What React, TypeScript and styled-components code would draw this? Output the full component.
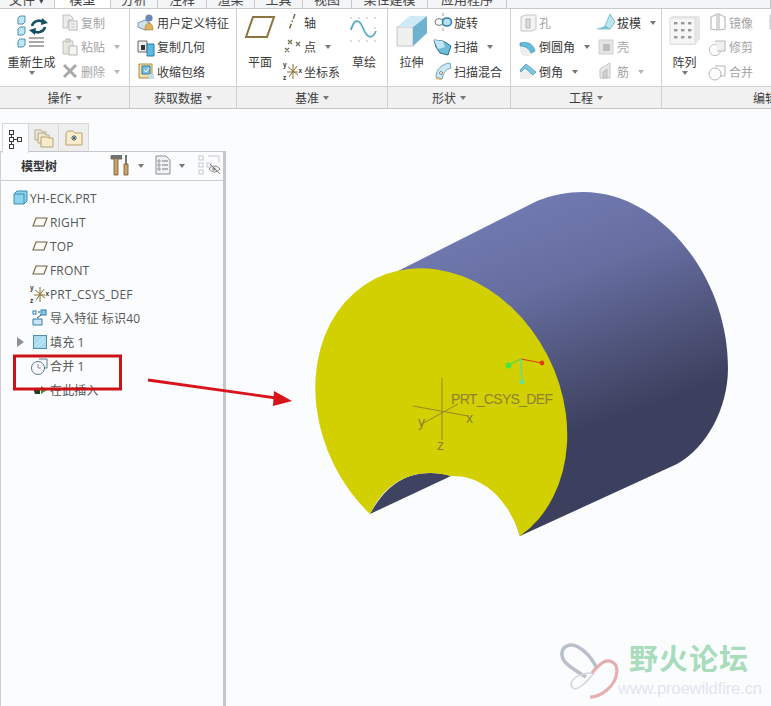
import React from "react";
import styled, { createGlobalStyle } from "styled-components";

const Global = createGlobalStyle`
  html, body { margin: 0; padding: 0; background: #fbfcfe; }
  body { width: 771px; height: 706px; overflow: hidden; font-family: "Noto Sans CJK SC", "Liberation Sans", sans-serif; font-size: 12px; color: #3a3a3a; }
`;

const Page = styled.div`
  position: relative; width: 771px; height: 706px; overflow: hidden;
  display: flex; flex-direction: column; background: #fbfcfe;
`;
const TabBar = styled.div`
  display: flex; height: 8px; flex: none; overflow: hidden; background: #f3f4f6;
  border-bottom: 1px solid #c9c9c9; align-items: flex-end;
`;
const Tab = styled.div<{ $w: number; $on?: boolean }>`
  width: ${p => p.$w}px; height: 8px; flex: none; box-sizing: border-box;
  display: flex; justify-content: center; align-items: flex-end;
  border-right: 1px solid #c9c9c9;
  background: ${p => (p.$on ? "#fff" : "#f4f5f7")};
  font-size: 13px; line-height: 16px; color: #444;
  span { display: block; height: 16px; flex: none; margin-bottom: 1px; }
`;
const Ribbon = styled.div`
  display: flex; height: 99px; flex: none; background: #fff; border-bottom: 1px solid #c4c4c4; box-sizing: content-box; overflow: hidden;
`;
const Group = styled.div<{ $w: number }>`
  width: ${p => p.$w}px; flex: none; display: flex; flex-direction: column; box-sizing: border-box;
  border-right: 1px solid #d0d0d0;
`;
const GroupBody = styled.div<{ $pad: number; $gap?: number }>`
  height: 77px; flex: none; display: flex; padding-left: ${p => p.$pad}px; gap: ${p => p.$gap ?? 0}px; box-sizing: border-box;
`;
const GroupFoot = styled.div<{ $clip?: boolean }>`
  height: 22px; flex: none; display: flex; align-items: center; justify-content: ${p => (p.$clip ? "flex-start" : "center")};
  box-sizing: border-box; padding-left: ${p => (p.$clip ? "91px" : "0")}; gap: 4px; background: #f1f1f2; border-top: 1px solid #cfcfcf;
  font-size: 12px; color: #3c3c3c; white-space: nowrap;
`;
const Caret = styled.i<{ $faint?: boolean }>`
  display: inline-block; flex: none; width: 0; height: 0; margin-top: 1px;
  border-left: 3.5px solid transparent; border-right: 3.5px solid transparent;
  border-top: 4px solid ${p => (p.$faint ? "#b5b5b5" : "#777")};
`;
const Big = styled.div<{ $w: number }>`
  width: ${p => p.$w}px; flex: none; display: flex; flex-direction: column; align-items: center;
  padding-top: 6px; box-sizing: border-box;
`;
const BigIcon = styled.div`
  height: 39px; display: flex; align-items: flex-start; justify-content: center; flex: none;
`;
const BigLabel = styled.div`
  height: 16px; line-height: 16px; white-space: nowrap; font-size: 12px;
`;
const ToolCol = styled.div<{ $w: number }>`
  width: ${p => p.$w}px; flex: none; display: flex; flex-direction: column; padding-top: 1px; box-sizing: border-box;
`;
const ToolRow = styled.div<{ $off?: boolean }>`
  height: 24.5px; display: flex; align-items: center; gap: 1px; white-space: nowrap; font-size: 12px;
  color: ${p => (p.$off ? "#a4a4a4" : "#3a3a3a")};
`;
const ToolIcon = styled.span`
  width: 20px; height: 20px; display: flex; align-items: center; justify-content: center; flex: none;
`;
const ToolCaret = styled.span`
  display: inline-flex; margin-left: 8px;
`;
const Main = styled.div`
  flex: 1; display: flex; min-height: 0; position: relative;
`;
const Side = styled.div`
  width: 226px; flex: none; display: flex; flex-direction: column; padding-top: 14px; box-sizing: border-box;
`;
const SideTabs = styled.div`
  display: flex; padding-left: 2px; height: 29px; flex: none; position: relative; z-index: 1;
`;
const SideTab = styled.div<{ $on?: boolean }>`
  width: 30px; height: ${p => (p.$on ? "30px" : "29px")}; box-sizing: border-box; display: flex; align-items: center; justify-content: center;
  background: ${p => (p.$on ? "#fbfcfe" : "#eeeeee")};
  border: 1px solid #d8d8d8; border-left-width: ${p => (p.$on ? "1px" : "0")};
  border-bottom: ${p => (p.$on ? "none" : "1px solid #c4c4c4")};
  &:first-child { width: 27px; }
`;
const Panel = styled.div`
  flex: 1; display: flex; flex-direction: column; border-left: 1px solid #cfcfcf; border-right: 3px solid #c6c6c6;
  border-top: 1px solid #c8c8c8; margin-top: -1px;
`;
const TreeBar = styled.div`
  height: 29px; flex: none; display: flex; align-items: center; border-bottom: 1px solid #cccccc; padding: 0 0 2px 20px; box-sizing: border-box;
`;
const TreeTitle = styled.div`
  width: 89px; font-weight: 700; font-size: 12px; color: #333; flex: none;
`;
const BarButton = styled.span<{ $w: number }>`
  display: inline-flex; align-items: center; width: ${p => p.$w}px; flex: none;
`;
const TreeList = styled.div`
  display: flex; flex-direction: column; padding-top: 5px;
`;
const TreeRow = styled.div<{ $root?: boolean }>`
  height: 24px; display: flex; align-items: center; position: relative; white-space: nowrap;
  padding-left: ${p => (p.$root ? "9px" : "29px")}; font-size: 12px; color: #565656;
  font-family: "Open Sans", "Noto Sans CJK SC", sans-serif;
  letter-spacing: 0.15px;
`;
const RowIcon = styled.span`
  width: 20px; height: 20px; flex: none; display: flex; align-items: center; justify-content: center;
`;
const Expander = styled.i`
  position: absolute; left: 16px; top: 7px; width: 0; height: 0;
  border-top: 5px solid transparent; border-bottom: 5px solid transparent; border-left: 7px solid #8f8f8f;
`;
const Canvas = styled.div`
  flex: 1; position: relative; background: #fbfcfe; min-width: 0;
`;
const Drawing = styled.svg`
  position: absolute; left: 0; top: 0; display: block;
`;
const Overlay = styled.svg`
  position: absolute; left: 0; top: 0; pointer-events: none; display: block;
`;
const LogoName = styled.text`
  font-family: "Noto Sans CJK SC", sans-serif; font-weight: 700; font-size: 29px; fill: #a9dcbb; letter-spacing: 1px;
`;
const LogoUrl = styled.text`
  font-family: "Liberation Sans", sans-serif; font-size: 16.5px; fill: #dfe6ee;
`;
const CsysText = styled.text`
  font-family: "Liberation Sans", sans-serif; fill: #8d8233;
`;

const I = ({ w = 20, h = 20, children }: { w?: number; h?: number; children: React.ReactNode }) => (
  <svg width={w} height={h} viewBox={`0 0 ${w} ${h}`}>{children}</svg>
);

const Regen = () => (
  <I w={34} h={34}>
    <g fill="#bfe6f5" stroke="#4d91b3" strokeWidth="1">
      <path d="M3 3l2-2h5v6l-2 2H3z" /><path d="M3 14l2-2h5v6l-2 2H3z" /><path d="M3 26l2-2h5v6l-2 2H3z" />
    </g>
    <g fill="none" stroke="#14505f" strokeWidth="2.6">
      <path d="M17 11a7 7 0 0 1 12-3" /><path d="M30 12a7 7 0 0 1-12 3" />
    </g>
    <path d="M27 3l6 5-7 2z" fill="#14505f" /><path d="M20 20l-6-5 7-2z" fill="#14505f" />
    <g stroke="#8d8d8d" strokeWidth="1.4">
      <path d="M14 23h15M14 27h15M14 31h15" />
    </g>
  </I>
);
const Copy = () => (
  <I><path d="M3 3h7l3 3v2H8v8H3z" fill="#ececec" stroke="#c0c0c0" /><path d="M9 9h8v9H9z" fill="#f4f4f4" stroke="#b5b5b5" /><path d="M11 12h4M11 15h4" stroke="#c0c0c0" /></I>
);
const Paste = () => (
  <I><path d="M3 4h10v13H3z" fill="#e8e8e2" stroke="#c2c2bb" /><path d="M6 2h4v3H6z" fill="#ddd" stroke="#bbb" /><path d="M9 9h8v9H9z" fill="#f5f5f5" stroke="#b5b5b5" /></I>
);
const Del = () => (
  <I><path d="M4 4l12 12M16 4L4 16" stroke="#a9a9a9" strokeWidth="3" /></I>
);
const UserFeat = () => (
  <I><path d="M2 11l7-3 5 3v5l-5 2-7-3z" fill="#cfe3ee" stroke="#7b98a8" /><circle cx="13" cy="6" r="3.6" fill="#6e86b8" /><path d="M9 18c0-5 2-7 4-7s4 2 4 7z" fill="#e2b35d" stroke="#a57c2c" strokeWidth=".6" /></I>
);
const CopyGeom = () => (
  <I><path d="M2 4h9v11H2z" fill="#f0f0f0" stroke="#666" /><path d="M5 8h4v5H5z" fill="#333" /><path d="M11 7h7v12h-7z" fill="#5fb8df" stroke="#2d7ca3" /></I>
);
const Shrink = () => (
  <I><path d="M3 3h13v14H3z" fill="#f1dfae" stroke="#b08e3e" /><path d="M6 5h8v8H6z" fill="#7fc1dc" stroke="#2d7ca3" /><path d="M8 9l2 2 3-4" stroke="#fff" fill="none" /><path d="M13 13h5v5h-5z" fill="#bfe0ef" /></I>
);
const PlaneBig = () => (
  <I w={32} h={24}><path d="M9 2h21l-7 20H2z" fill="#fff" stroke="#8a7440" strokeWidth="2" /></I>
);
const Axis = () => (
  <I><path d="M12 2l-6 16" stroke="#6d5a38" strokeWidth="1.4" strokeDasharray="5 2 1.5 2" /></I>
);
const Pt = () => (
  <I><g stroke="#6d6d55" strokeWidth="1.3"><path d="M5 3l4 4M9 3L5 7M13 5l4 4M17 5l-4 4M2 11l4 4M6 11l-4 4" /></g></I>
);
const Csys = () => (
  <I>
    <path d="M5 6l10 8M14 5L6 16M10 3v15M4 11h11" stroke="#8b7032" strokeWidth="1" fill="none" />
    <text x="0" y="6" fontSize="6.500" fontWeight="700" fill="#333" fontFamily="Liberation Sans">y</text>
    <text x="15.500" y="12" fontSize="6.500" fontWeight="700" fill="#333" fontFamily="Liberation Sans">x</text>
    <text x="0" y="19" fontSize="6.500" fontWeight="700" fill="#333" fontFamily="Liberation Sans">z</text>
  </I>
);
const Sketch = () => (
  <I w={30} h={30}>
    <g fill="#a0a0a0"><circle cx="2" cy="3" r=".7" /><circle cx="10" cy="3" r=".7" /><circle cx="18" cy="3" r=".7" /><circle cx="26" cy="3" r=".7" /><circle cx="2" cy="13" r=".7" /><circle cx="26" cy="13" r=".7" /><circle cx="2" cy="26" r=".7" /><circle cx="10" cy="26" r=".7" /><circle cx="18" cy="26" r=".7" /><circle cx="26" cy="26" r=".7" /></g>
    <path d="M2 15C5 4 10 3 14 13s9 12 13 3" fill="none" stroke="#5aa9c2" strokeWidth="1.8" />
  </I>
);
const Extrude = () => (
  <I w={32} h={33}>
    <path d="M1 12L14 1h17v17L17 31H1z" fill="#a9d7ea" />
    <path d="M1 12h16v19H1z" fill="#f0f0f0" stroke="#c4c4c4" />
    <path d="M17 12L31 1v17L17 31z" fill="#6fb2cf" />
    <path d="M1 12L14 1h17L17 12z" fill="#cfeaf5" />
  </I>
);
const Revolve = () => (
  <I><path d="M10 1v18" stroke="#999" strokeDasharray="3 2" /><ellipse cx="6" cy="10" rx="4" ry="3.4" fill="#fff" stroke="#777" /><ellipse cx="14" cy="10" rx="4.5" ry="4" fill="#bde0ee" stroke="#2a82a8" strokeWidth="1.6" /></I>
);
const Sweep = () => (
  <I><path d="M1 3l9 1 8 5-3 9-8-2-4-6z" fill="#6fbcd8" stroke="#22708f" /><path d="M1 3l9 1 2 6-7 2z" fill="#c3e6f2" /></I>
);
const Blend = () => (
  <I><path d="M3 16C3 8 9 3 17 2l1 5c-5 1-8 5-9 11z" fill="#cfe9f3" stroke="#6aa7bf" /><path d="M3 16l6 2-1 1-5-1z" fill="#e0b466" /><circle cx="8" cy="12" r="1.5" fill="#fff" stroke="#888" /></I>
);
const Hole = () => (
  <I><path d="M3 5l4-2h11v14l-4 2H3z" fill="#f3f3f3" stroke="#c5c5c5" /><path d="M8 7h4v9H8z" fill="#ddd" stroke="#b4b4b4" /></I>
);
const Draft = () => (
  <I><path d="M1 17l8-3 5-12 5 8-5 7z" fill="#6fc0de" /><path d="M9 14l5-12 5 8-5 7z" fill="#bfe4f1" stroke="#5aa" strokeWidth=".6" /><path d="M1 17h13" stroke="#8cc" /></I>
);
const Round = () => (
  <I><path d="M2 6c8-2 13 1 15 8l-5 5H5L2 14z" fill="#eee" /><path d="M2 6c8-2 13 1 15 8l-4 2C11 11 7 9 2 9z" fill="#63bcdc" stroke="#2a84a6" strokeWidth=".6" /></I>
);
const Shell = () => (
  <I><path d="M3 3h14v14H3z" fill="#e5e5e5" stroke="#d0d0d0" /><path d="M7 7h7v7H7z" fill="#bdbdbd" /></I>
);
const Chamfer = () => (
  <I><path d="M2 9l6-6 10 8-7 7H2z" fill="#eee" /><path d="M2 9l6-6 10 8-3 3-8-7-4 4z" fill="#7cc8e2" stroke="#2a84a6" strokeWidth=".6" /></I>
);
const Rib = () => (
  <I><path d="M4 17V8l10-6v15z" fill="#e8e8e8" stroke="#c4c4c4" /><path d="M7 17v-6l4-3v9z" fill="#cfcfcf" stroke="#bbb" /></I>
);
const Pattern = () => (
  <I w={32} h={31}>
    <path d="M1 3l2-2h27l1 3v20l-5 6H1z" fill="#e6e6e6" />
    <path d="M1 3h25v26H1z" fill="#f6f6f6" stroke="#dedede" />
    <g fill="#9a9a9a">
      {[7, 14, 21].flatMap(y => [5, 12, 19].map(x => <rect key={`${x}-${y}`} x={x} y={y} width="3.4" height="2.4" />))}
    </g>
  </I>
);
const Mirror = () => (
  <I><path d="M9 2L3 5v12l6 1zM11 2l6 3v12l-6 1z" fill="none" stroke="#bcbcbc" strokeWidth="1.2" /></I>
);
const Trim = () => (
  <I><circle cx="7" cy="13" r="5.6" fill="none" stroke="#c0c0c0" /><path d="M7 4h10v10H9" fill="#f0f0f0" stroke="#b8b8b8" /></I>
);
const Merge = () => (
  <I><circle cx="7" cy="13" r="6" fill="#fdfdfd" stroke="#b5b5b5" /><path d="M7 5h10v10h-5" fill="none" stroke="#b5b5b5" /></I>
);
const Stub = () => (
  <I><path d="M2 3h16v14H2z" fill="#f0f0f0" stroke="#c4c4c4" /><path d="M2 9h16M10 3v14" stroke="#ccc" /></I>
);

const CubeRoot = () => (
  <I w={16} h={16}><path d="M2 4l3-3h10v10l-3 3H2z" fill="#8ad3ee" stroke="#3f8fb0" /><path d="M2 4h10v10" fill="none" stroke="#3f8fb0" /></I>
);
const PlaneTree = () => (
  <I w={16} h={14}><path d="M4 3h11l-3 8H1z" fill="#fbfbf5" stroke="#6d6343" strokeWidth="1.1" /></I>
);
const Import = () => (
  <I><path d="M3 11h9v6H3z" fill="#c9e5f1" stroke="#2c7ea3" /><rect x="11" y="2" width="5" height="5" fill="#7fcbe6" stroke="#2c7ea3" /><rect x="3" y="3" width="3" height="3" fill="#fff" stroke="#2c7ea3" /><path d="M8 4l2 0M7 10l4-3" stroke="#444" /></I>
);
const Fill = () => (
  <I w={16} h={16}><rect x="1.500" y="1.500" width="13" height="13" fill="#a6dcee" stroke="#4f8fab" /><path d="M3 12l9-9M6 13l7-7" stroke="#d4eef7" /></I>
);
const MergeTree = () => (
  <I><circle cx="8" cy="12" r="6.500" fill="#fbfcfe" stroke="#55788a" /><path d="M8 12V8M8 12h3" stroke="#88a" /><path d="M9 3h8v9h-3" fill="none" stroke="#5c7b8c" /></I>
);
const Insert = () => (
  <I w={16} h={14}><path d="M4 7h5V3l6 4-6 4V7" fill="#3a9a3a" /><path d="M1 5h7v6H3z" fill="#223d22" /></I>
);

const TreeGlyph = () => (
  <I w={16} h={20}>
    <g fill="#fff" stroke="#3a3a3a" strokeWidth="1">
      <rect x="1.500" y="1.500" width="4" height="4" /><rect x="1.500" y="8.500" width="4" height="4" /><rect x="1.500" y="15.500" width="4" height="4" /><rect x="9.500" y="8.500" width="4" height="4" />
    </g>
    <path d="M3.500 5.500v3M3.500 12.500v3M5.500 10.500h4" stroke="#3a3a3a" />
  </I>
);
const Folders = () => (
  <I w={20} h={20}>
    <path d="M1 2h6l2 2h3v8H1z" fill="#ece8dc" stroke="#b4ad96" />
    <path d="M4 5h6l2 2h3v8H4z" fill="#efe8d4" stroke="#b4a980" />
    <path d="M7 9h6l2 1h4v9H7z" fill="#f6ebcb" stroke="#b4a272" />
  </I>
);
const Star = () => (
  <I w={18} h={16}>
    <path d="M1 3l2-2h5l2 2h7v12H1z" fill="#f8ecca" stroke="#b7a26d" />
    <path d="M9 5v6M6 8h6M7 6l4 4M11 6l-4 4" stroke="#39566e" strokeWidth=".9" />
  </I>
);
const Tools = () => (
  <I w={20} h={22}>
    <path d="M1 2h10l1 3H8v16H4V5H1z" fill="#c9a36a" stroke="#71562e" strokeWidth=".8" />
    <path d="M1 1h11v4H1z" fill="#707070" />
    <path d="M15 1h2v9h-2z" fill="#777" /><path d="M14 10h4v11h-4z" fill="#c9a36a" stroke="#71562e" strokeWidth=".8" />
  </I>
);
const Doc = () => (
  <I w={16} h={20}>
    <path d="M1 1h10l4 4v14H1z" fill="#f0f2f4" stroke="#8a9299" />
    <path d="M7 6h6M7 10h6M7 14h6" stroke="#777" />
    <path d="M3 5h2v2H3zM3 9h2v2H3zM3 13h2v2H3z" fill="#fff" stroke="#777" strokeWidth=".7" />
  </I>
);
const HideTree = () => (
  <I w={24} h={22}>
    <g fill="#fff" stroke="#c7c7c7"><rect x="1" y="2" width="4" height="4" /><rect x="1" y="9" width="4" height="4" /><rect x="1" y="16" width="4" height="4" /><rect x="9" y="9" width="4" height="4" /><path d="M10 2h11v7" fill="none" /></g>
    <path d="M11 15c3-4 8-4 11 0-3 4-8 4-11 0z" fill="#eee" stroke="#8d8d8d" />
    <circle cx="16" cy="15" r="1.6" fill="#888" /><path d="M12 10l10 10" stroke="#777" />
  </I>
);

type ToolDef = { icon: React.ReactNode; label: string; off?: boolean; caret?: boolean };
const Tool = ({ icon, label, off, caret }: ToolDef) => (
  <ToolRow $off={off}>
    <ToolIcon>{icon}</ToolIcon>
    {label}
    {caret && <ToolCaret><Caret $faint={off} /></ToolCaret>}
  </ToolRow>
);
const Column = ({ w, tools }: { w: number; tools: ToolDef[] }) => (
  <ToolCol $w={w}>{tools.map(t => <Tool key={t.label} {...t} />)}</ToolCol>
);
const BigTool = ({ w, icon, label, caret }: { w: number; icon: React.ReactNode; label: string; caret?: boolean }) => (
  <Big $w={w}>
    <BigIcon>{icon}</BigIcon>
    <BigLabel>{label}</BigLabel>
    {caret && <Caret />}
  </Big>
);

const tabs: [string, number, boolean?][] = [
  ["文件 ▾", 55], ["模型", 56, true], ["分析", 47], ["注释", 49], ["渲染", 48],
  ["工具", 48], ["视图", 49], ["柔性建模", 76], ["应用程序", 79], ["", 264],
];

const treeRows: { icon: React.ReactNode; label: string; root?: boolean; exp?: boolean }[] = [
  { icon: <CubeRoot />, label: "YH-ECK.PRT", root: true },
  { icon: <PlaneTree />, label: "RIGHT" },
  { icon: <PlaneTree />, label: "TOP" },
  { icon: <PlaneTree />, label: "FRONT" },
  { icon: <Csys />, label: "PRT_CSYS_DEF" },
  { icon: <Import />, label: "导入特征 标识40" },
  { icon: <Fill />, label: "填充 1", exp: true },
  { icon: <MergeTree />, label: "合并 1" },
  { icon: <Insert />, label: "在此插入" },
];

const Model = () => (
  <>
    <defs>
      <linearGradient id="body" gradientUnits="userSpaceOnUse" x1="535" y1="205" x2="612" y2="420">
        <stop offset="0" stopColor="#7079af" />
        <stop offset="0.35" stopColor="#666d9f" />
        <stop offset="0.72" stopColor="#4e5379" />
        <stop offset="1" stopColor="#3c405e" />
      </linearGradient>
    </defs>
    <path d="M392 273L537 200C552 194 568 191 583 191C660 191 728 275 728 367C728 408 706 447 677 463L520 535L470 380Z" fill="url(#body)" />
    <path d="M370 513C385 485 405 472 430 472C438 472 445 473 451 475Z" fill="#3f4362" />
    <path d="M370 513A148 120 63.7 1 1 520 535C508 497 482 474 451 475C444 473 437 472 430 472C405 472 383 485 370 513Z" fill="#d2d000" />
    <g stroke="#8d7f32" strokeWidth="0.9" fill="none">
      <path d="M442 377V439M413 405L468 415M420 424L458 403" />
    </g>
    <CsysText x="451" y="403" fontSize="14" textLength="102">PRT_CSYS_DEF</CsysText>
    <CsysText x="466" y="422" fontSize="14">x</CsysText>
    <CsysText x="418" y="426" fontSize="14">y</CsysText>
    <CsysText x="437" y="449" fontSize="14">z</CsysText>
    <path d="M521 358L542 362" stroke="#e03a1a" strokeWidth="1.2" />
    <path d="M521 358L508 364" stroke="#55d84a" strokeWidth="1.2" />
    <path d="M521 358L522 381" stroke="#52e0a6" strokeWidth="1.2" />
    <circle cx="542" cy="362" r="2.4" fill="#e8380f" />
    <circle cx="508.500" cy="364.500" r="3" fill="#46e63c" />
    <circle cx="522" cy="381" r="2.2" fill="#50e6b0" />
  </>
);

const Logo = () => (
  <>
    <path d="M597 668C590 652 577 643 570 644C560 646 560 656 566 662C572 668 580 672 586 676" fill="none" stroke="#b9c0cc" strokeWidth="3.5" />
    <path d="M592 672C578 672 568 680 572 686C576 692 586 682 594 672" fill="none" stroke="#d2d6dd" strokeWidth="1.5" />
    <path d="M590 696C600 696 616 686 617 670C617 660 608 658 602 662C598 665 595 668 592 672" fill="none" stroke="#e6aeb1" strokeWidth="3.2" />
    <LogoName x="629" y="669">野火论坛</LogoName>
    <LogoUrl x="618" y="693" textLength="144">www.proewildfire.cn</LogoUrl>
  </>
);

export default function App() {
  return (
    <Page>
      <Global />
      <TabBar>
        {tabs.map(([t, w, on]) => <Tab key={t + w} $w={w} $on={on}><span>{t}</span></Tab>)}
      </TabBar>
      <Ribbon>
        <Group $w={130}>
          <GroupBody $pad={7} $gap={4}>
            <BigTool w={49} icon={<Regen />} label="重新生成" caret />
            <Column w={68} tools={[
              { icon: <Copy />, label: "复制", off: true },
              { icon: <Paste />, label: "粘贴", off: true, caret: true },
              { icon: <Del />, label: "删除", off: true, caret: true },
            ]} />
          </GroupBody>
          <GroupFoot>操作<Caret /></GroupFoot>
        </Group>
        <Group $w={107}>
          <GroupBody $pad={6}>
            <Column w={100} tools={[
              { icon: <UserFeat />, label: "用户定义特征" },
              { icon: <CopyGeom />, label: "复制几何" },
              { icon: <Shrink />, label: "收缩包络" },
            ]} />
          </GroupBody>
          <GroupFoot>获取数据<Caret /></GroupFoot>
        </Group>
        <Group $w={151}>
          <GroupBody $pad={6} $gap={6}>
            <BigTool w={34} icon={<PlaneBig />} label="平面" />
            <Column w={60} tools={[
              { icon: <Axis />, label: "轴" },
              { icon: <Pt />, label: "点", caret: true },
              { icon: <Csys />, label: "坐标系" },
            ]} />
            <BigTool w={30} icon={<Sketch />} label="草绘" />
          </GroupBody>
          <GroupFoot>基准<Caret /></GroupFoot>
        </Group>
        <Group $w={123}>
          <GroupBody $pad={7} $gap={5}>
            <BigTool w={33} icon={<Extrude />} label="拉伸" />
            <Column w={76} tools={[
              { icon: <Revolve />, label: "旋转" },
              { icon: <Sweep />, label: "扫描", caret: true },
              { icon: <Blend />, label: "扫描混合" },
            ]} />
          </GroupBody>
          <GroupFoot>形状<Caret /></GroupFoot>
        </Group>
        <Group $w={151}>
          <GroupBody $pad={7} $gap={1}>
            <Column w={77} tools={[
              { icon: <Hole />, label: "孔", off: true },
              { icon: <Round />, label: "倒圆角", caret: true },
              { icon: <Chamfer />, label: "倒角", caret: true },
            ]} />
            <Column w={62} tools={[
              { icon: <Draft />, label: "拔模", caret: true },
              { icon: <Shell />, label: "壳", off: true },
              { icon: <Rib />, label: "筋", off: true, caret: true },
            ]} />
          </GroupBody>
          <GroupFoot>工程<Caret /></GroupFoot>
        </Group>
        <Group $w={110}>
          <GroupBody $pad={6} $gap={7}>
            <BigTool w={33} icon={<Pattern />} label="阵列" caret />
            <Column w={53} tools={[
              { icon: <Mirror />, label: "镜像", off: true },
              { icon: <Trim />, label: "修剪", off: true },
              { icon: <Merge />, label: "合并", off: true },
            ]} />
            <Column w={20} tools={[
              { icon: <Stub />, label: "", off: true },
            ]} />
          </GroupBody>
          <GroupFoot $clip>编辑</GroupFoot>
        </Group>
      </Ribbon>
      <Main>
        <Side>
          <SideTabs>
            <SideTab $on><TreeGlyph /></SideTab>
            <SideTab><Folders /></SideTab>
            <SideTab><Star /></SideTab>
          </SideTabs>
          <Panel>
            <TreeBar>
              <TreeTitle>模型树</TreeTitle>
              <BarButton $w={45}><Tools /><ToolCaret><Caret /></ToolCaret></BarButton>
              <BarButton $w={43}><Doc /><ToolCaret><Caret /></ToolCaret></BarButton>
              <HideTree />
            </TreeBar>
            <TreeList>
              {treeRows.map(r => (
                <TreeRow key={r.label} $root={r.root}>
                  {r.exp && <Expander />}
                  <RowIcon>{r.icon}</RowIcon>
                  {r.label}
                </TreeRow>
              ))}
            </TreeList>
          </Panel>
        </Side>
        <Canvas />
        <Drawing width="771" height="598" viewBox="0 108 771 598">
          <Model />
          <Logo />
        </Drawing>
        <Overlay width="771" height="598" viewBox="0 108 771 598">
          <rect x="14.500" y="355" width="106" height="33" fill="none" stroke="#cc1219" strokeWidth="3" />
          <path d="M148 379L276 397" stroke="#d8131b" strokeWidth="2.8" />
          <path d="M292 400L274 390L273 405Z" fill="#d8131b" />
        </Overlay>
      </Main>
    </Page>
  );
}
